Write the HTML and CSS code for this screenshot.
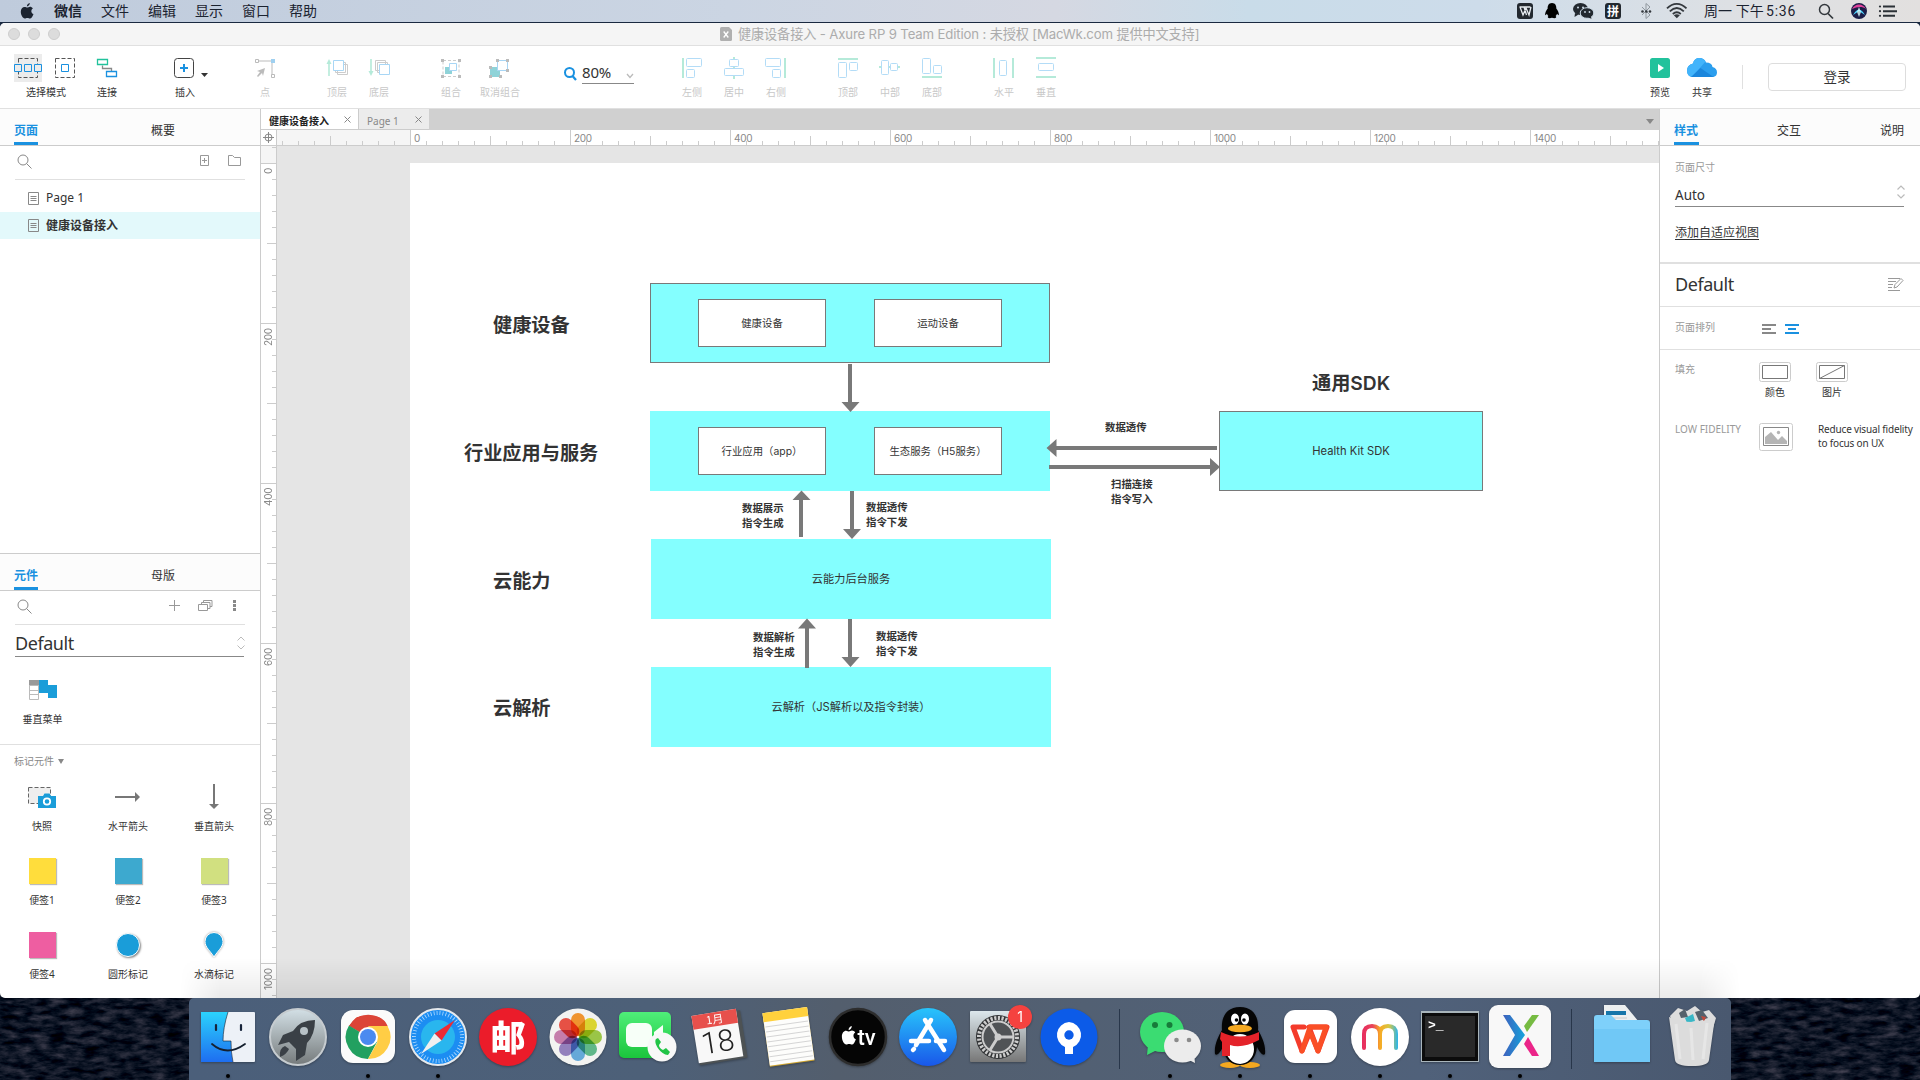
FILE: index.html
```html
<!DOCTYPE html>
<html lang="zh-CN">
<head>
<meta charset="utf-8">
<title>健康设备接入 - Axure RP 9</title>
<link rel="stylesheet" href="styles.css">
</head>
<body>
<header class="menubar">
  <svg class="apple" width="14" height="16" viewBox="0 0 14 16"><path d="M9.8 0C9.9 1.8 8.500 3.400 6.900 3.400 6.700 1.800 8.200.2 9.800 0ZM10 3.800c1 0 2.200.6 2.900 1.600-2.300 1.400-2 4.700.6 5.600C12.600 13.400 11.400 15.500 10 15.500c-1 0-1.400-.6-2.600-.6s-1.700.6-2.600.6C2.800 15.500.8 12 .8 8.800.8 5.700 2.600 3.900 4.600 3.900c1.100 0 2 .7 2.700.7S8.900 3.800 10 3.800Z" fill="#1b2330"/></svg>
  <nav class="menus"><b>微信</b><span>文件</span><span>编辑</span><span>显示</span><span>窗口</span><span>帮助</span></nav>
  <svg class="status" width="180" height="22" viewBox="1515 0 180 22">
    <rect x="1517" y="3" width="16" height="16" rx="3" fill="#22282f"/>
    <path d="M1519.500 7h11M1520 7l3 8 3-7 3 7 2-8M1524 7l2.500 8" fill="none" stroke="#e6ebf0" stroke-width="1.300"/>
    <path d="M1552 3c-3.500 0-4.500 3-4.300 5.500-1.500 2-2.900 4.500-2.500 6.500.6.500 1.200-.6 1.700-1.200.3 1 .8 1.700 1.500 2.300-2 1.800 1 2.700 3.600 1.600 2.600 1.100 5.600.2 3.600-1.600.7-.6 1.200-1.300 1.500-2.300.5.600 1.100 1.700 1.700 1.200.4-2-1-4.500-2.500-6.500C1556.500 6 1555.500 3 1552 3Z"/>
    <ellipse cx="1580.500" cy="9" rx="7.500" ry="6" fill="#22282f"/><path d="M1575 13l-.500 4 4-2.500z" fill="#22282f"/>
    <g stroke="#cddce8"><ellipse cx="1587" cy="13" rx="6.800" ry="5.300" fill="#22282f"/></g>
    <path d="M1588 17.500l3.500 1.200-.8-3z" fill="#22282f"/>
    <g fill="#cddce8"><circle cx="1578" cy="7.500" r="1"/><circle cx="1583" cy="7.500" r="1"/><circle cx="1585" cy="12" r=".9"/><circle cx="1589.500" cy="12" r=".9"/></g>
    <rect x="1605" y="3" width="16" height="16" rx="3" fill="#22282f"/>
    <text x="1607" y="15.500" class="pin">拼</text>
    <path d="M1642 7l8 8-4 3.500V3.500l4 3.500-8 8" fill="none" stroke="#8f979e"/>
    <g fill="#33383d"><circle cx="1642.500" cy="11.500" r="1.300"/><circle cx="1646.300" cy="11.500" r="1.300"/><circle cx="1650" cy="11.500" r="1.300"/></g>
    <g fill="none" stroke="#33383d" stroke-width="1.800"><path d="M1667 8.300c6-6 13.500-6 19.500 0M1669.800 11.300c4.500-4.300 9.500-4.300 14 0M1672.800 14c2.800-2.400 5.300-2.400 8 0"/></g><path d="M1673.800 15.200q3-1.700 6 0l-3 3z" fill="#33383d"/>
  </svg>
  <span class="clock">周一 下午<em>5:36</em></span>
  <svg width="84" height="22" viewBox="1816 0 84 22">
    <circle cx="1824.500" cy="9.500" r="5" fill="none" stroke="#33383d" stroke-width="1.500"/><path d="M1828 13.500l5 5" stroke="#33383d" stroke-width="1.700"/>
    <circle cx="1859" cy="11" r="8" fill="#1b1d48"/><path d="M1852 9c3-6 11-6 14 0-4-3-9-2-14 0" fill="#e0429b"/><path d="M1853 15c4-7 8-7 12 0l-6-4z" fill="#4ed6ff"/><path d="M1859 7l-2 5 2 5 2-5z" fill="#dff" opacity=".8"/>
    <g fill="#2b3036"><path d="M1883 5.500h12v2h-12zM1883 10.200h14v2h-14zM1883 14.800h12v2h-12z"/><circle cx="1880" cy="6.500" r="1.100"/><circle cx="1880" cy="11.200" r="1.100"/><circle cx="1880" cy="15.800" r="1.100"/></g>
  </svg>
</header>

<main class="window">
  <div class="titlebar">
    <i class="light"></i><i class="light"></i><i class="light"></i>
    <div class="title">
      <svg width="12" height="14" viewBox="0 0 12 14"><path d="M1.500 0H9l3 3v9.500q0 1.500-1.500 1.500h-9Q0 14 0 12.500v-11Q0 0 1.500 0Z" fill="#b0b0b0"/><path d="M3.700 4.500l4.600 6M8.300 4.500l-4.600 6" stroke="#fff" stroke-width="1.300"/></svg>
      <span>健康设备接入 - Axure RP 9 Team Edition : 未授权 [MacWk.com 提供中文支持]</span>
    </div>
  </div>

  <div class="toolbar">
    <div class="tool modes">
      <svg width="66" height="28" viewBox="12 54 66 28"><path fill="#ececec" d="M14 54h28v28H14z"/><g fill="none" stroke="#555" stroke-dasharray="4 2"><path d="M18.500 58.500h19v19h-19zM55.500 58.500h19v19h-19z"/></g><g stroke="#1a91e0" fill="#ececec"><path d="M14.500 64.500h7v7h-7zM24.500 64.500h7v7h-7zM34.500 64.500h7v7h-7z"/><path fill="#fff" d="M61.500 64.500h7v7h-7z"/></g></svg>
      <span>选择模式</span></div>
    <div class="tool"><svg width="42" height="28" viewBox="86 54 42 28"><g fill="none" stroke-width="1.300"><path d="M102.500 65.500v3h9v3" stroke="#888"/><path d="M97.500 59.500h10v5h-10z" stroke="#22c29c"/><path d="M106.500 71.500h10v5h-10z" stroke="#1a91e0"/></g></svg><span>连接</span></div>
    <div class="tool gap-wide"><svg width="50" height="28" viewBox="164 54 50 28"><rect x="174.500" y="58.500" width="19" height="19" rx="3" fill="none" stroke="#444"/><path d="M180 68h8M184 64v8" stroke="#1a91e0" stroke-width="2"/><path d="M201 73h7l-3.500 4z" fill="#333"/></svg><span>插入</span></div>
    <div class="tool off gap-point"><svg width="42" height="28" viewBox="244 54 42 28"><path d="M258 61h14v14" fill="none" stroke="#bbb"/><path d="M255.500 59.500h3v3h-3zM271.500 74.500h3v3h-3z" fill="#fff" stroke="#bbb"/><path d="M271 59h4v4h-4z" fill="#9fd0f0"/><path d="M265 68l-8 3 3 1-3 4 1 1 4-4 1 3z" fill="#bbb"/></svg><span>点</span></div>
    <div class="tool off gap"><svg width="42" height="28" viewBox="316 54 42 28"><path d="M329 76V63" stroke="#b5ead9" stroke-width="1.600"/><path d="M326.500 64l2.500-5 2.500 5z" fill="#b5ead9"/><g fill="#fff"><path stroke="#ccc" d="M337.500 64.500h10v10h-10zM335.500 62.500h10v10h-10z"/><path stroke="#a8d6f5" d="M333.500 60.500h10v10h-10z"/></g></svg><span>顶层</span></div>
    <div class="tool off"><svg width="42" height="28" viewBox="358 54 42 28"><path d="M371 59v14" stroke="#b5ead9" stroke-width="1.600"/><path d="M368.500 71l2.500 5 2.500-5z" fill="#b5ead9"/><g fill="#fff"><path stroke="#ccc" d="M375.500 60.500h10v10h-10zM377.500 62.500h10v10h-10z"/><path stroke="#a8d6f5" d="M379.500 64.500h10v10h-10z"/></g></svg><span>底层</span></div>
    <div class="tool off gap"><svg width="42" height="28" viewBox="430 54 42 28"><path d="M443 60.500h16v16h-16z" fill="none" stroke="#ccc" stroke-dasharray="3 2"/><path fill="#bbb" d="M441 59h3v3h-3zM458 59h3v3h-3zM441 75h3v3h-3zM458 75h3v3h-3z"/><path fill="#8fd3d8" d="M445 67h7v7h-7z"/><path fill="#fff" stroke="#a8d6f5" d="M449.500 63.500h7v7h-7z"/></svg><span>组合</span></div>
    <div class="tool off gap-small"><svg width="42" height="28" viewBox="479 54 42 28"><path fill="#8fd3d8" d="M490 67h10v10h-10z"/><path fill="#fff" stroke="#a8d6f5" d="M497.500 60.500h10v10h-10z"/><path fill="#bbb" d="M496 59h3v3h-3zM506 59h3v3h-3zM506 69h3v3h-3zM489 66h3v3h-3zM489 75h3v3h-3zM499 75h3v3h-3z"/></svg><span>取消组合</span></div>
    <div class="zoom">
      <svg width="16" height="16" viewBox="0 0 16 16"><circle cx="6.500" cy="7.500" r="4.500" fill="none" stroke="#1a91e0" stroke-width="2"/><path d="M9.500 11l3.500 4" stroke="#1a91e0" stroke-width="2.300"/></svg>
      <div class="zoom-value"><span>80%</span><svg width="8" height="6" viewBox="0 0 8 6"><path d="M1 1l3 3.500L7 1" fill="none" stroke="#bbb" stroke-width="1.300"/></svg></div>
    </div>
    <div class="tool off gap-align"><svg width="42" height="28" viewBox="671 54 42 28"><path d="M683 58v20" stroke="#b5ead9" stroke-width="2"/><g fill="none" stroke="#b3dcf7"><rect x="686.500" y="58.500" width="15" height="8" rx="1"/><rect x="686.500" y="69.500" width="8" height="8" rx="1"/></g></svg><span>左侧</span></div>
    <div class="tool off"><svg width="42" height="28" viewBox="713 54 42 28"><path d="M734 57v22" stroke="#b5ead9" stroke-width="2"/><g fill="#fff" stroke="#b3dcf7"><rect x="729.500" y="59.500" width="9" height="7" rx="1"/><rect x="724.500" y="68.500" width="19" height="7" rx="1"/></g></svg><span>居中</span></div>
    <div class="tool off"><svg width="42" height="28" viewBox="755 54 42 28"><path d="M785 58v20" stroke="#b5ead9" stroke-width="2"/><g fill="none" stroke="#b3dcf7"><rect x="765.500" y="58.500" width="15" height="8" rx="1"/><rect x="772.500" y="69.500" width="8" height="8" rx="1"/></g></svg><span>右侧</span></div>
    <div class="tool off gap"><svg width="42" height="28" viewBox="827 54 42 28"><path d="M838 59h20" stroke="#b5ead9" stroke-width="2"/><g fill="none" stroke="#b3dcf7"><rect x="838.500" y="62.500" width="8" height="15" rx="1"/><rect x="849.500" y="62.500" width="8" height="8" rx="1"/></g></svg><span>顶部</span></div>
    <div class="tool off"><svg width="42" height="28" viewBox="869 54 42 28"><path d="M879 67h21" stroke="#b5ead9" stroke-width="2"/><g fill="#fff" stroke="#b3dcf7"><rect x="881.500" y="60.500" width="7" height="14" rx="1"/><rect x="890.500" y="63.500" width="7" height="7" rx="1"/></g></svg><span>中部</span></div>
    <div class="tool off"><svg width="42" height="28" viewBox="911 54 42 28"><path d="M922 77h20" stroke="#b5ead9" stroke-width="2"/><g fill="none" stroke="#b3dcf7"><rect x="922.500" y="58.500" width="8" height="15" rx="1"/><rect x="933.500" y="65.500" width="8" height="8" rx="1"/></g></svg><span>底部</span></div>
    <div class="tool off gap"><svg width="42" height="28" viewBox="983 54 42 28"><path d="M994 58v20M1013 58v20" stroke="#b5ead9" stroke-width="2"/><rect x="999.500" y="60.500" width="7" height="15" rx="1" fill="none" stroke="#b3dcf7"/></svg><span>水平</span></div>
    <div class="tool off"><svg width="42" height="28" viewBox="1025 54 42 28"><path d="M1036 58h20M1036 77h20" stroke="#b5ead9" stroke-width="2"/><rect x="1038.500" y="63.500" width="15" height="7" rx="1" fill="none" stroke="#b3dcf7"/></svg><span>垂直</span></div>
    <div class="tool push"><svg width="42" height="28" viewBox="1639 54 42 28"><rect x="1650" y="58" width="20" height="20" rx="2.500" fill="#22c29c"/><path d="M1658 64l6 4-6 4z" fill="#fff"/></svg><span>预览</span></div>
    <div class="tool"><svg width="42" height="28" viewBox="1681 54 42 28"><path d="M1692 77q-5-1-5-6.500 0-5.500 6-7 1-5.500 6.500-5.500 5 0 6.500 4.500 6 0 6.500 4.500 4.500 1 4.500 5.500 0 3.500-3.500 4.500z" fill="#2b9eee"/><path d="M1687 71q0-6 6-7.500 1-5.500 6.500-5.500 4 0 6 3.500l-13.500 15.500q-5-1-5-6z" fill="#42b4fb"/><path d="M1691 77l9.500-9 13 9z" fill="#1a86dc"/></svg><span>共享</span></div>
    <i class="tool-rule"></i>
    <button class="login">登录</button>
  </div>

  <div class="workspace">
    <aside class="left">
      <div class="tabs"><b>页面</b><span>概要</span></div>
      <div class="searchrow">
        <svg class="mag" width="16" height="16" viewBox="0 0 16 16"><circle cx="6" cy="6" r="5" fill="none" stroke="#888"/><path d="M9.500 9.500l5 5" stroke="#888"/></svg>
        <svg width="45" height="14" viewBox="199 155 45 14"><g fill="none" stroke="#999"><path d="M200.500 156.500h8v10h-8zM202 161.500h5M204.500 159v5M228.500 156.500h4l2 2h6v8h-12z"/></g></svg>
      </div>
      <div class="page-item"><svg width="11" height="13" viewBox="0 0 11 13"><path d="M.5.500h10v12H.5zM2.500 4.500h6M2.500 6.500h6M2.500 8.500h6" fill="none" stroke="#888"/></svg>Page 1</div>
      <div class="page-item selected"><svg width="11" height="13" viewBox="0 0 11 13"><path d="M.5.500h10v12H.5zM2.500 4.500h6M2.500 6.500h6M2.500 8.500h6" fill="none" stroke="#888"/></svg>健康设备接入</div>

      <section class="library">
        <div class="tabs"><b>元件</b><span>母版</span></div>
        <div class="searchrow">
          <svg class="mag" width="16" height="16" viewBox="0 0 16 16"><circle cx="6" cy="6" r="5" fill="none" stroke="#888"/><path d="M9.500 9.500l5 5" stroke="#888"/></svg>
          <svg width="75" height="14" viewBox="169 600 75 14"><g fill="none" stroke="#999"><path d="M169 606.500h11M174.500 601v11M198.500 605.500h9v6h-9zM201.500 605v-1.500h8.500v6h-2M203.500 603v-1.500h8.500v6h-2"/></g><path fill="#888" d="M233 601h3v3h-3zM233 605h3v3h-3zM233 609h3v3h-3z"/></svg>
        </div>
        <div class="select big">Default<svg width="8" height="14" viewBox="0 0 8 14"><path d="M.5 4.500L4 1l3.500 3.500M.5 9.500L4 13l3.500-3.500" fill="none" stroke="#bbb"/></svg></div>
        <div class="widgets first">
          <figure><svg width="28" height="20" viewBox="0 0 28 20"><path fill="#fff" stroke="#bbb" d="M.5.500h9v19h-9zM.5 5.500h9M.5 10.500h9M.5 14.500h9"/><path fill="#999" d="M0 0h10v5H0z"/><path fill="#1a9dd9" d="M10 0h9v5h9v13h-9v-5h-9z"/></svg><figcaption>垂直菜单</figcaption></figure>
        </div>
        <h4>标记元件<i></i></h4>
        <div class="widgets">
          <figure><svg width="28" height="26" viewBox="0 0 28 26"><path fill="#eee" stroke="#666" stroke-dasharray="4 2" d="M.5 3.500h22v16h-22z"/><path fill="#1a9dd9" d="M10 12h5l1.500-2.500h5L23 12h5v12H10z"/><circle cx="19" cy="17.500" r="3.200" fill="none" stroke="#fff" stroke-width="1.800"/></svg><figcaption>快照</figcaption></figure>
          <figure><svg width="28" height="26" viewBox="0 0 28 26"><path d="M1 13h21" stroke="#777" stroke-width="2"/><path d="M21 8l5 5-5 5z" fill="#777"/></svg><figcaption>水平箭头</figcaption></figure>
          <figure><svg width="28" height="26" viewBox="0 0 28 26"><path d="M14 0v21" stroke="#777" stroke-width="2"/><path d="M9 20h10l-5 5z" fill="#777"/></svg><figcaption>垂直箭头</figcaption></figure>
          <figure><i class="note yellow"></i><figcaption>便签1</figcaption></figure>
          <figure><i class="note blue"></i><figcaption>便签2</figcaption></figure>
          <figure><i class="note green"></i><figcaption>便签3</figcaption></figure>
          <figure><i class="note pink"></i><figcaption>便签4</figcaption></figure>
          <figure><i class="disc"></i><figcaption>圆形标记</figcaption></figure>
          <figure><svg class="drop" width="28" height="26" viewBox="0 0 28 26"><path d="M14 25C10.500 19 5 15.500 5 9.500a9 9 0 0 1 18 0C23 15.500 17.500 19 14 25Z" fill="#1a9dd9" stroke="#fff"/></svg><figcaption>水滴标记</figcaption></figure>
        </div>
      </section>
    </aside>

    <section class="editor">
      <div class="doc-tabs">
        <div class="doc active"><span>健康设备接入</span><svg width="7" height="7" viewBox="0 0 7 7"><path d="M.5.500l6 6M6.500.5l-6 6" stroke="#888"/></svg></div>
        <div class="doc"><span>Page 1</span><svg width="7" height="7" viewBox="0 0 7 7"><path d="M.5.500l6 6M6.500.5l-6 6" stroke="#888"/></svg></div>
        <i class="more"></i>
      </div>
      <div class="ruler-row">
        <div class="corner"><svg width="11" height="11" viewBox="0 0 11 11"><path d="M5.500 0v11M0 5.500h11" stroke="#888"/><circle cx="5.500" cy="5.500" r="3.500" fill="none" stroke="#888"/></svg></div>
        <div class="hruler"><span>0</span><span>200</span><span>400</span><span>600</span><span>800</span><span>1000</span><span>1200</span><span>1400</span></div>
      </div>
      <div class="canvas-row">
        <div class="vruler"><span>0</span><span>200</span><span>400</span><span>600</span><span>800</span><span>1000</span></div>
        <div class="canvas">
          <div class="artboard">
            <div class="node devices"><span>健康设备</span><span>运动设备</span></div>
            <div class="node plain services"><span>行业应用（app）</span><span>生态服务（H5服务）</span></div>
            <div class="node plain cloud">云能力后台服务</div>
            <div class="node plain parse">云解析（JS解析以及指令封装）</div>
            <div class="node sdk">Health Kit SDK</div>
            <b class="layer l1">健康设备</b>
            <b class="layer l2">行业应用与服务</b>
            <b class="layer l3">云能力</b>
            <b class="layer l4">云解析</b>
            <b class="layer l5">通用SDK</b>
            <b class="edge e1">数据展示<br>指令生成</b>
            <b class="edge e2">数据透传<br>指令下发</b>
            <b class="edge e3">数据解析<br>指令生成</b>
            <b class="edge e4">数据透传<br>指令下发</b>
            <b class="edge e5">数据透传</b>
            <b class="edge e6">扫描连接<br>指令写入</b>
            <svg class="arrows" width="1249" height="835" viewBox="410 163 1249 835">
              <g stroke="#797979" stroke-width="4"><path d="M850 364v40M801 537v-38M852 491v39M807 668v-41M850 619v40M1217 448h-162M1049 467h162"/></g>
              <g fill="#797979"><path d="M841.500 402h18l-9 10zM792.500 500h18l-9-9.500zM843 529h18l-9 10zM798 628.500h18l-9-10zM841.500 657h18l-9 10zM1056.500 439v18l-10-9zM1210 458v18l10-9z"/></g>
            </svg>
          </div>
        </div>
      </div>
    </section>

    <aside class="right">
      <div class="tabs"><b>样式</b><span>交互</span><span>说明</span></div>
      <div class="prop-size">
        <label>页面尺寸</label>
        <div class="select">Auto<svg width="8" height="14" viewBox="0 0 8 14"><path d="M.5 4.500L4 1l3.500 3.500M.5 9.500L4 13l3.500-3.500" fill="none" stroke="#bbb" stroke-width="1.200"/></svg></div>
        <a>添加自适应视图</a>
      </div>
      <div class="prop-style">Default<svg width="16" height="14" viewBox="0 0 16 14"><g fill="none" stroke="#999"><path d="M0 1.500h12M0 4.500h8M0 7.500h5M0 10.500h4M0 13.500h12"/><path d="M6 11l1-3.500 6-6 2 2-6 6.500z"/></g></svg></div>
      <div class="prop-align"><label>页面排列</label><svg width="38" height="10" viewBox="0 0 38 10"><path d="M0 1h14M0 5h9M0 9h14" stroke="#888" stroke-width="2"/><path d="M23 1h14M26 5h8M23 9h14" stroke="#1a91e0" stroke-width="2"/></svg></div>
      <div class="prop-fill"><label>填充</label>
        <figure><svg width="32" height="20" viewBox="0 0 32 20"><rect x=".5" y=".5" width="31" height="19" rx="2" fill="#fff" stroke="#ccc"/><path d="M3.500 3.500h25v13h-25z" fill="none" stroke="#777"/></svg><figcaption>颜色</figcaption></figure>
        <figure><svg width="32" height="20" viewBox="0 0 32 20"><rect x=".5" y=".5" width="31" height="19" rx="2" fill="#fff" stroke="#ccc"/><path d="M3.500 3.500h25v13h-25zM3.500 16.500l25-13" fill="none" stroke="#777"/></svg><figcaption>图片</figcaption></figure>
      </div>
      <div class="prop-fidelity"><label>LOW FIDELITY</label>
        <svg width="34" height="28" viewBox="0 0 34 28"><rect x=".5" y=".5" width="33" height="27" rx="2" fill="#fff" stroke="#ccc"/><path d="M4.500 4.500h25v18h-25z" fill="none" stroke="#888"/><path d="M6 21v-7l6-5 7 8 4-4 5 5v3z" fill="#b5b5b5"/><circle cx="19.500" cy="9.500" r="1.700" fill="#b5b5b5"/></svg>
        <p>Reduce visual fidelity<br>to focus on UX</p>
      </div>
    </aside>
  </div>
</main>

<footer class="desktop">
  <svg class="sea" width="1920" height="88" viewBox="0 0 1920 88"><filter id="w" x="0" y="0" width="100%" height="100%" color-interpolation-filters="sRGB"><feTurbulence type="fractalNoise" baseFrequency=".06 .17" numOctaves="4" seed="4"/><feColorMatrix values=".5 0 0 0 -.2  .42 0 0 0 -.13  .42 0 0 0 -.07  0 0 0 0 1"/></filter><rect width="1920" height="88" filter="url(#w)"/></svg>
  <nav class="dock">
    <svg viewBox="0 0 70 82"><defs><linearGradient id="fb" x2="0" y2="1"><stop stop-color="#2bd3fd"/><stop offset="1" stop-color="#1e6ef0"/></linearGradient></defs><rect x="8" y="14" width="54" height="50" rx="1" fill="#edf1f7"/><path d="M8 14h27q-5 16-5 29h8q0 12 2 21H8z" fill="url(#fb)"/><path d="M23 27v5M48 27v5" stroke="#17233a" stroke-width="2.200" stroke-linecap="round"/><path d="M35 14q-5 16-5 29h8q0 12 2 21" fill="none" stroke="#16202f" stroke-width=".6"/><path d="M19 46q15 13 33 0" fill="none" stroke="#16202f" stroke-width="1.800" stroke-linecap="round"/><circle cx="35" cy="78" r="2"/></svg>
    <svg viewBox="0 0 70 82"><defs><linearGradient id="gr" x2="0" y2="1"><stop stop-color="#d3e0e6"/><stop offset="1" stop-color="#757a7b"/></linearGradient></defs><circle cx="35" cy="39" r="28" fill="url(#gr)" stroke="#c6ccd0" stroke-width="2"/><path d="M52 22q-15 0-22 11l-10 4-5 10 11-3 7 7v12l9-6 2-12q8-8 8-23Z" fill="#3a4046"/><circle cx="41" cy="33" r="4" fill="#b7c1c6"/><path d="M22 48q-6 2-5 11 7-3 9-8z" fill="#3a4046"/></svg>
    <svg viewBox="0 0 70 82"><rect x="8" y="12" width="54" height="53" rx="12" fill="#fbfbfb"/><path d="M35 39L16 28a22 22 0 0 1 38.500 0z" fill="#dc4437"/><path d="M35 39l-19-11.500A22 22 0 0 0 35 61l9-17z" fill="#22a060"/><path d="M35 39l19.500-11A22 22 0 0 1 35 61l9.500-17z" fill="#ffcd45"/><path d="M35 28h19.500L57 39l-13 4z" fill="#ffcd45"/><path d="M16 28h38.500q-2-6-9-9H24z" fill="#dc4437"/><circle cx="35" cy="39" r="10" fill="#fff"/><circle cx="35" cy="39" r="8" fill="#4a8af0"/><circle cx="35" cy="78" r="2"/></svg>
    <svg viewBox="0 0 70 82"><circle cx="35" cy="39" r="28" fill="#1c8df2" stroke="#e5e9ed" stroke-width="2"/><circle cx="35" cy="39" r="17" fill="#29b6ee"/><circle cx="35" cy="39" r="24" fill="none" stroke="#b5dcff" stroke-width="4" stroke-dasharray=".8 2.200"/><path d="M52 22L38.500 42.500l-7-7z" fill="#ed2c34"/><path d="M18 56l13.500-20.500 7 7z" fill="#f0f0f0"/><circle cx="35" cy="78" r="2"/></svg>
    <svg viewBox="0 0 70 82"><circle cx="35" cy="39" r="29" fill="#eb1c2a"/><text x="35" y="53" class="you">邮</text></svg>
    <svg viewBox="0 0 70 82"><circle cx="35" cy="39" r="28.500" fill="#f3f3f1"/><g class="petals"><rect x="28" y="15" width="14" height="23" rx="7" fill="#fb9b31"/><rect x="28" y="15" width="14" height="23" rx="7" fill="#e5df33" transform="rotate(45 35 39)"/><rect x="28" y="15" width="14" height="23" rx="7" fill="#a2cf4b" transform="rotate(90 35 39)"/><rect x="28" y="15" width="14" height="23" rx="7" fill="#65c091" transform="rotate(135 35 39)"/><rect x="28" y="15" width="14" height="23" rx="7" fill="#6bb2e5" transform="rotate(180 35 39)"/><rect x="28" y="15" width="14" height="23" rx="7" fill="#9a86c7" transform="rotate(225 35 39)"/><rect x="28" y="15" width="14" height="23" rx="7" fill="#cf83b5" transform="rotate(270 35 39)"/><rect x="28" y="15" width="14" height="23" rx="7" fill="#f25549" transform="rotate(315 35 39)"/></g></svg>
    <svg viewBox="0 0 70 82"><defs><linearGradient id="ft" x2="0" y2="1"><stop stop-color="#4fee79"/><stop offset="1" stop-color="#1bc53c"/></linearGradient></defs><rect x="6" y="14" width="52" height="46" rx="5" fill="url(#ft)"/><rect x="13" y="25" width="26" height="24" rx="6" fill="#f7fff8"/><path d="M41 34l9-7v17l-9-5z" fill="#f7fff8"/><circle cx="49" cy="49" r="14.500" fill="#f8f8f8"/><path d="M43 41c-3 4 5 16 12 16l2-3-4-4-3 2q-4-2-4-5l2-3-3-4z" fill="#22c447"/></svg>
    <svg viewBox="0 0 70 82"><g transform="rotate(-9 35 39)"><rect x="13" y="16" width="48" height="48" fill="#4d5254"/><rect x="12" y="14" width="45" height="48" fill="#f8f8f8"/><path d="M12 14h45v14H12z" fill="#e7504c"/><text x="34.500" y="25" class="cal-m">1月</text><text x="34" y="54" class="cal-d">18</text></g></svg>
    <svg viewBox="0 0 70 82"><g transform="rotate(-8 35 39)"><rect x="13" y="12" width="45" height="54" fill="#d0a631"/><rect x="13" y="12" width="45" height="53" fill="#fdfdfb"/><path d="M13 12h45v9H13z" fill="#ffd13d"/><path d="M14 26h43M14 31h43M14 36h43M14 41h43M14 46h43M14 51h43M14 56h43M14 61h43" stroke="#d5d5d5"/></g></svg>
    <svg viewBox="0 0 70 82"><circle cx="35" cy="39" r="28" fill="#050505" stroke="#2d2d2d" stroke-width="2.500"/><g transform="translate(18 28) scale(1.100 1.200)"><path d="M9.800 0C9.900 1.800 8.500 3.400 6.900 3.400 6.700 1.800 8.200.2 9.800 0ZM10 3.800c1 0 2.200.6 2.900 1.600-2.300 1.400-2 4.700.6 5.600C12.600 13.400 11.400 15.500 10 15.500c-1 0-1.400-.6-2.600-.6s-1.700.6-2.600.6C2.800 15.500.8 12 .8 8.800.8 5.700 2.600 3.900 4.600 3.900c1.100 0 2 .7 2.700.7S8.900 3.800 10 3.800Z" fill="#fff"/></g><text x="34.500" y="47" class="tv">tv</text></svg>
    <svg viewBox="0 0 70 82"><defs><linearGradient id="as" x2="0" y2="1"><stop stop-color="#28c4fb"/><stop offset="1" stop-color="#1957e9"/></linearGradient></defs><circle cx="35" cy="39" r="29" fill="url(#as)"/><g stroke="#fff" stroke-width="4.500" stroke-linecap="round"><path d="M38 22L23 47M32 22l19 30M18 43h18M43 43h9M21 51l-1 1"/></g></svg>
    <div class="slot"><svg viewBox="0 0 70 82"><defs><linearGradient id="sp" x2="0" y2="1"><stop stop-color="#dce7ec"/><stop offset="1" stop-color="#777"/></linearGradient></defs><rect x="7" y="13" width="56" height="51" rx="1" fill="url(#sp)"/><circle cx="35" cy="39" r="22" fill="#303234"/><circle cx="35" cy="39" r="19" fill="none" stroke="#ccc" stroke-width="4" stroke-dasharray="2.200 1.500"/><circle cx="35" cy="39" r="15.500" fill="#505356" stroke="#ccc" stroke-width="2"/><path d="M35 39L27 26M35 39h15M35 39l-8 13" stroke="#ccc" stroke-width="3"/><circle cx="35" cy="39" r="3.500" fill="#ccc"/></svg><b class="badge">1</b></div>
    <svg viewBox="0 0 70 82"><circle cx="36" cy="39" r="28.500" fill="#0c5be8"/><path d="M36 24a13 13 0 0 0-4 25v7h8v-7a13 13 0 0 0-4-25z" fill="#fff"/><circle cx="36" cy="37" r="4.700" fill="#0c5be8"/></svg>
    <i class="sep"></i>
    <svg viewBox="0 0 70 82"><ellipse cx="27" cy="34" rx="22" ry="20" fill="#3bdc72"/><path d="M13 47l-1 10 10-5z" fill="#3bdc72"/><circle cx="20" cy="27" r="3" fill="#177c3a"/><circle cx="34.500" cy="27" r="3" fill="#177c3a"/><ellipse cx="47.500" cy="48" rx="18.500" ry="16.500" fill="#ececec"/><path d="M52 61l8 4-1-9z" fill="#ececec"/><circle cx="41.500" cy="42" r="2.300" fill="#8b8b8b"/><circle cx="54" cy="42" r="2.300" fill="#8b8b8b"/><circle cx="35" cy="78" r="2"/></svg>
    <svg viewBox="0 0 70 82"><ellipse cx="25" cy="67" rx="10" ry="3" fill="#f4a820"/><ellipse cx="45" cy="67" rx="10" ry="3" fill="#f4a820"/><path d="M35 9c-13 0-19 9-18 23-4 7-8 15-7 24 2 3 6-3 8-7 1 11 7 18 17 18s16-7 17-18c2 4 6 10 8 7 1-9-3-17-7-24C54 18 48 9 35 9Z" fill="#050505"/><ellipse cx="35" cy="51" rx="14" ry="15" fill="#fff"/><path d="M16 34q19 9 38 0v8q-17 9-29 5v11h-8V44l-2-3z" fill="#e4232a"/><ellipse cx="30" cy="21" rx="4" ry="5.500" fill="#fff"/><ellipse cx="40" cy="21" rx="4" ry="5.500" fill="#fff"/><circle cx="31.500" cy="22" r="1.800"/><circle cx="39" cy="22" r="1.800"/><ellipse cx="35" cy="30.500" rx="12" ry="3.800" fill="#f4a820"/><circle cx="35" cy="78" r="2"/></svg>
    <svg viewBox="0 0 70 82"><rect x="9" y="12" width="53" height="53" rx="11" fill="#fff"/><g fill="none" stroke-linejoin="round" stroke-linecap="round" stroke-width="5"><path d="M18 29h11M18 29l9 24 7-17M52 29l-9 24-9-24h18" stroke="#f43b2b"/><path d="M27 53l8-24h16l-8 24-7-17" stroke="#fa4f26"/></g><circle cx="35" cy="78" r="2"/></svg>
    <svg viewBox="0 0 70 82"><defs><linearGradient id="mm" gradientUnits="userSpaceOnUse" x1="17" x2="53"><stop stop-color="#e72d60"/><stop offset=".3" stop-color="#e9445a"/><stop offset=".5" stop-color="#f8aa24"/><stop offset=".75" stop-color="#d5c744"/><stop offset="1" stop-color="#28b4ee"/></linearGradient></defs><circle cx="35" cy="39" r="29" fill="#fff"/><path d="M19 50V36q0-8 8-8t8 8v14M35 36q0-8 8-8t8 8v14" fill="none" stroke="url(#mm)" stroke-width="4" stroke-linecap="round"/><circle cx="35" cy="78" r="2"/></svg>
    <svg viewBox="0 0 70 82"><path fill="#a9b5bb" d="M6 13h58v51H6z"/><path fill="#0c0c0c" d="M7 15h56v48H7z"/><path fill="#292929" d="M10 18h50v41H10z"/><text x="13" y="31" class="term">&gt;_</text><circle cx="35" cy="78" r="2"/></svg>
    <svg viewBox="0 0 70 82"><defs><linearGradient id="ax"><stop stop-color="#3f60bd"/><stop offset="1" stop-color="#14a4dc"/></linearGradient></defs><rect x="4" y="7" width="62" height="63" rx="9" fill="#f8f8f8"/><path d="M18 17h7l15 20-15 21h-7l12-21z" fill="url(#ax)"/><path d="M54 17h-7l-8 11 3 6z" fill="#76bb42"/><path d="M54 58h-7l-8-12 4-7z" fill="#eb2589"/><circle cx="35" cy="78" r="2"/></svg>
    <i class="sep"></i>
    <svg viewBox="0 0 70 82"><path d="M17 7h21l14 17v12H17z" fill="#eceff0"/><path d="M19 13h20v4H19z" fill="#1676aa"/><path d="M20 20h20M20 23h20" stroke="#ccc"/><path d="M7 20q0-3 3-3h14l5 5h31q3 0 3 3v39H7z" fill="#7ed0fa"/><path d="M7 31h56v33H7z" fill="#70c8f6"/></svg>
    <svg viewBox="0 0 70 82"><path d="M13 18l8-8 9 3 8-5 7 6 7-2 7 8-3 10H17z" fill="#ddd"/><path d="M22 15l6-4 3 8-7 1zM38 14l7-2 6 8-9 3z" fill="#55616b"/><path d="M28 20l8-4 2 7-8 2z" fill="#39b7c6"/><path d="M44 18l5 1-2 5z" fill="#c04a3c"/><path d="M12 19q23 10 46 0l-6 43q-1 6-17 6t-17-6z" fill="#dcdcdc"/><path d="M19 26l4 35M50 25l-4 36M34 30l2 32" stroke="#e9e9e9" stroke-width="3" opacity=".8"/></svg>
  </nav>
</footer>
</body>
</html>
```
FILE: styles.css
```css
* { box-sizing: border-box; }
body { margin: 0; width: 1920px; height: 1080px; overflow: hidden; background: #1a2940; color: #333; font: 12px/16px "Noto Sans", "Noto Sans CJK SC", sans-serif; display: flex; flex-direction: column; }
svg { display: block; flex: none; }
figure, h4, p { margin: 0; }

/* system menu bar */
.menubar { flex: none; height: 22px; display: flex; align-items: center; padding-left: 20px; font: 14px/22px Roboto, "Noto Sans CJK SC", sans-serif; color: #1b2330; background: linear-gradient(90deg, #bfcbdc, #cbd5e3 38%, #d5d8e2 55%, #c9dce9 65%, #cddcea 77%, #dde0e4 90%, #e2e0df); }
.menus { display: flex; gap: 19px; margin-left: 20px; }
.status { margin-left: auto; }
.clock { width: 92px; margin: 0 20px 0 9px; white-space: nowrap; letter-spacing: .1px; }
.clock em { font-style: normal; margin-left: 2px; letter-spacing: .8px; }
.pin { font: bold 12px "Noto Sans CJK SC", sans-serif; fill: #fff; }
.menubar > svg:last-child { margin-right: 20px; }

/* application window */
.window { position: relative; z-index: 1; flex: none; height: 975px; margin-top: 1px; background: #fff; border-radius: 5px; overflow: hidden; display: flex; flex-direction: column; }
.titlebar { flex: none; height: 23px; background: #f5f5f5; border-bottom: 1px solid #e0e0e0; display: flex; align-items: center; gap: 8px; padding-left: 8px; }
.light { width: 12px; height: 12px; border-radius: 50%; background: #dcdcdc; border: 1px solid #cdcdcd; }
.title { display: flex; align-items: center; gap: 6px; margin-left: 652px; color: #acacac; font: 13.200px/22px Inter, "Noto Sans CJK SC", sans-serif; letter-spacing: -.15px; white-space: nowrap; }
.toolbar { flex: none; height: 63px; border-bottom: 1px solid #e0e0e0; display: flex; padding: 8px 14px 0 12px; }
.tool { width: 42px; display: flex; flex-direction: column; align-items: center; gap: 2px; font-size: 10px; color: #333; white-space: nowrap; }
.tool svg { align-self: flex-start; }
.tool.off { color: #c8c8c8; }
.modes { width: 68px; margin-right: 6px; }
.gap { margin-left: 30px; }
.gap-wide { margin-left: 36px; }
.gap-point { margin-left: 38px; }
.gap-small { margin-left: 7px; }
.gap-align { margin-left: 37px; }
.push { margin-left: auto; }
.zoom { display: flex; margin: 11px 0 0 42px; gap: 3px; }
.zoom-value { width: 52px; height: 19px; border-bottom: 1px solid #888; display: flex; justify-content: space-between; align-items: flex-start; font: 15px/17px "Noto Sans", sans-serif; letter-spacing: -.2px; }
.zoom-value span { margin-top: -1px; }
.zoom-value svg { margin-top: 8px; }
.tool-rule { width: 1px; height: 24px; margin: 11px 25px 0 19px; background: #e0e0e0; }
.login { width: 138px; height: 28px; margin-top: 9px; border: 1px solid #ddd; border-radius: 4px; background: #fff; color: #333; font: 13.500px "Noto Sans CJK SC", sans-serif; padding: 0 0 2px; }
.workspace { flex: 1; display: flex; min-height: 0; }

/* side panels */
.tabs { flex: none; height: 37px; background: #fcfcfc; border-bottom: 1px solid #ccc; display: flex; padding-left: 14px; }
.tabs > * { width: 25px; margin-right: 112px; padding-top: 13px; font-weight: 400; line-height: 17px; white-space: nowrap; }
.left .tabs b { margin-right: 113px; }
.tabs b { color: #1a91e0; font-weight: 700; border-bottom: 3px solid #1a91e0; }
.left { flex: none; width: 261px; border-right: 1px solid #ccc; display: flex; flex-direction: column; }
.searchrow { flex: none; height: 34px; margin: 0 15px 5px; border-bottom: 1px solid #e0e0e0; display: flex; justify-content: space-between; padding: 8px 1px 0 2px; }
.page-item { flex: none; height: 27px; display: flex; align-items: center; gap: 7px; padding-left: 28px; }
.page-item:not(.selected) { padding-bottom: 1px; }
.page-item.selected { background: #e3f9fb; font-weight: 700; }
.library { flex: none; height: 445px; margin-top: auto; border-top: 1px solid #ccc; }
.library .searchrow { margin-bottom: 0; }
.select { display: flex; justify-content: space-between; align-items: center; border-bottom: 1px solid #888; }
.big { height: 32px; margin: 0 16px 0 15px; padding-top: 4px; font: 18px/24px "Noto Sans", sans-serif; letter-spacing: -.45px; }
.big svg { margin-right: -1px; }
.widgets { display: grid; grid-template-columns: repeat(3, 86px); grid-auto-rows: 74px; margin-left: -1px; }
.widgets figure { display: flex; flex-direction: column; align-items: center; font-size: 10px; }
.widgets figcaption { margin-top: 8px; width: 86px; text-align: center; }
.widgets.first { margin-left: 0; padding-top: 23px; grid-auto-rows: 64px; border-bottom: 1px solid #e0e0e0; }
.widgets.first figure { margin-left: -1px; }
.widgets.first figcaption { margin-top: 11px; }
.library h4 { display: flex; align-items: center; gap: 4px; height: 39px; padding: 0 0 7px 14px; font-weight: 400; font-size: 10px; color: #888; }
.library h4 i { border: 3px solid transparent; border-top: 5px solid #888; border-bottom: 0; }
.note { width: 27px; height: 26px; box-shadow: 1px 1px 1px #bbb; }
.yellow { background: #ffdd3c; }
.blue { background: #3da9cf; }
.green { background: #d1e080; }
.pink { background: #ee5ea1; }
.disc { width: 24px; height: 24px; margin: 1px; border-radius: 50%; background: #1a9dd9; border: 1px solid #fff; box-shadow: 1px 1px 2px #888; }
.drop { filter: drop-shadow(0 0 1px #999); }

/* document area */
.editor { flex: 1; min-width: 0; display: flex; flex-direction: column; }
.doc-tabs { flex: none; height: 21px; background: #d0d0d0; display: flex; font-size: 10px; }
.doc { width: 70px; padding: 3px 7px 0 8px; display: flex; justify-content: space-between; align-items: center; background: #ececec; color: #888; border-bottom: 1px solid #ccc; white-space: nowrap; }
.doc.active { width: 98px; background: #fff; color: #222; font-weight: 700; border-right: 1px solid #ccc; }
.doc svg { margin-bottom: 3px; }
.more { margin: 10px 5px 0 auto; height: 0; border: 4px solid transparent; border-top: 5px solid #888; border-bottom: 0; }
.ruler-row { flex: none; height: 16px; display: flex; border-bottom: 1px solid #ccc; }
.corner { width: 16px; border-right: 1px solid #ccc; display: flex; align-items: center; justify-content: center; }
.hruler { flex: 1; overflow: hidden; display: flex; padding-left: 133px; font: 10px/16px Inter, sans-serif; color: #888; background: repeating-linear-gradient(90deg, #ccc 0 1px, transparent 1px 16px) 5px bottom / 100% 4px no-repeat, repeating-linear-gradient(90deg, #ccc 0 1px, transparent 1px 80px) 53px bottom / 100% 9px no-repeat, linear-gradient(90deg, #f5f5f5 133px, #fff 133px); letter-spacing: -.3px; }
.hruler span { flex: none; width: 160px; padding-left: 3px; border-left: 1px solid #ccc; }
.canvas-row { flex: 1; min-height: 0; display: flex; }
.vruler { flex: none; width: 16px; overflow: hidden; display: flex; flex-direction: column; padding-top: 17px; border-right: 1px solid #ccc; font: 10px/15px Inter, sans-serif; letter-spacing: -.3px; color: #888; background: repeating-linear-gradient(#ccc 0 1px, transparent 1px 16px) right 1px / 4px 100% no-repeat, repeating-linear-gradient(#ccc 0 1px, transparent 1px 80px) right 17px / 9px 100% no-repeat, linear-gradient(#f5f5f5 17px, #fff 17px); }
.vruler span { flex: none; height: 160px; writing-mode: vertical-rl; transform: rotate(180deg); text-align: right; padding-bottom: 4px; border-bottom: 1px solid #ccc; }
.canvas { flex: 1; background: #e5e5e5; padding: 17px 0 0 133px; }
.artboard { position: relative; height: 100%; background: #fff; overflow: hidden; font-family: Inter, "Noto Sans CJK SC", sans-serif; }
.node { position: absolute; height: 80px; border: 1px solid #797979; background: #84ffff; font-size: 11.200px; display: flex; align-items: center; justify-content: center; gap: 48px; white-space: nowrap; width: 400px; }
.node.plain { border: 0; }
.node span { width: 128px; height: 48px; display: flex; align-items: center; justify-content: center; background: #fff; border: 1px solid #797979; font-size: 10.400px; padding-top: 1px; }
.devices { left: 240px; top: 120px; }
.services { left: 240px; top: 248px; }
.cloud { left: 241px; top: 376px; }
.parse { left: 241px; top: 504px; }
.sdk { left: 809px; top: 248px; width: 264px; }
.layer { position: absolute; font-size: 19.200px; line-height: 28px; white-space: nowrap; }
.l1 { left: 83px; top: 148px; }
.l2 { left: 54px; top: 276px; }
.l3 { left: 83px; top: 404px; }
.l4 { left: 83px; top: 531px; }
.l5 { left: 902px; top: 206px; font-weight: 600; }
.edge { position: absolute; font-size: 10.400px; line-height: 14.500px; white-space: nowrap; }
.e1 { left: 332px; top: 339px; }
.e2 { left: 456px; top: 338px; }
.e3 { left: 343px; top: 468px; }
.e4 { left: 466px; top: 467px; }
.e5 { left: 695px; top: 258px; }
.e6 { left: 701px; top: 315px; }
.arrows { position: absolute; left: 0; top: 0; }

/* inspector */
.right { flex: none; width: 261px; border-left: 1px solid #ccc; }
.right .tabs > * { margin-right: 78px; }
.right label { color: #999; font-size: 10px; line-height: 14px; white-space: nowrap; }
.right .tabs > :last-child { margin-right: 0; }
.prop-size { height: 118px; padding: 13px 16px 0 15px; border-bottom: 2px solid #e0e0e0; display: flex; flex-direction: column; }
.prop-size label { line-height: 17px; }
.prop-size .select { height: 31px; padding-top: 8px; font: 13.500px/20px "Noto Sans", sans-serif; }
.prop-size .select svg { margin: 0 -1px 6px 0; }
.prop-size a { align-self: flex-start; margin-top: 17px; text-decoration: underline; text-underline-offset: 2px; line-height: 17px; }
.prop-style { height: 43px; padding: 0 16px 2px 15px; border-bottom: 1px solid #e0e0e0; display: flex; align-items: center; justify-content: space-between; font: 18px/24px "Noto Sans", sans-serif; letter-spacing: -.45px; }
.prop-align { height: 43px; padding-left: 15px; border-bottom: 1px solid #e0e0e0; display: flex; align-items: center; }
.prop-align label { width: 87px; padding-bottom: 2px; }
.prop-align svg { margin-top: 2px; }
.prop-fill, .prop-fidelity { display: flex; padding: 12px 0 0 15px; }
.prop-fill label, .prop-fidelity label { width: 84px; }
.prop-fill figure { width: 32px; margin-right: 25px; font-size: 10px; text-align: center; }
.prop-fill figcaption { margin-top: 2px; }
.prop-fidelity { padding-top: 23px; }
.prop-fidelity label { margin-top: -1px; }
.prop-fidelity p { margin: -1px 0 0 25px; font: 10px/14px "Noto Sans", sans-serif; white-space: nowrap; letter-spacing: -.17px; }

/* desktop and dock */
.desktop { flex: none; height: 82px; position: relative; display: flex; justify-content: center; z-index: 0; }
.sea { position: absolute; left: 0; top: -6px; }
.dock { position: relative; width: 1542px; height: 82px; padding: 0 4px; display: flex; background: linear-gradient(90deg, #4b5f7a, #4d6078 30%, #535e6d 42%, #526073 58%, #50617a 80%, #49586f); border-radius: 5px 5px 0 0; }
.dock > svg, .slot { flex: none; width: 70px; height: 82px; filter: drop-shadow(0 1px 1px rgba(0, 0, 0, .3)); }
.slot { position: relative; }
.badge { position: absolute; left: 45px; top: 7px; width: 24px; height: 24px; border-radius: 50%; background: #f5423f; color: #fff; font: 14px/24px Inter, sans-serif; text-align: center; }
.sep { flex: none; width: 1px; height: 60px; margin: 11px 15px 0 16px; background: #28364a; }
.petals rect { mix-blend-mode: multiply; }
.you { font: 900 35px "Noto Sans CJK SC", sans-serif; fill: #fff; text-anchor: middle; }
.cal-m { font: 11px "Noto Sans CJK SC", sans-serif; fill: #fff; text-anchor: middle; }
.cal-d { font: 300 30px Roboto, sans-serif; fill: #222; text-anchor: middle; }
.tv { font: 500 22px Roboto, sans-serif; fill: #fff; text-anchor: start; }
.term { font: bold 13px "Liberation Mono", monospace; fill: #fff; }
.window::after { content: ""; position: absolute; left: 180px; right: 180px; bottom: 0; height: 40px; background: linear-gradient(transparent, rgba(0, 0, 0, .08)); -webkit-mask: linear-gradient(90deg, transparent, #000 40px, #000 1520px, transparent); mask: linear-gradient(90deg, transparent, #000 40px, #000 1520px, transparent); }
```
